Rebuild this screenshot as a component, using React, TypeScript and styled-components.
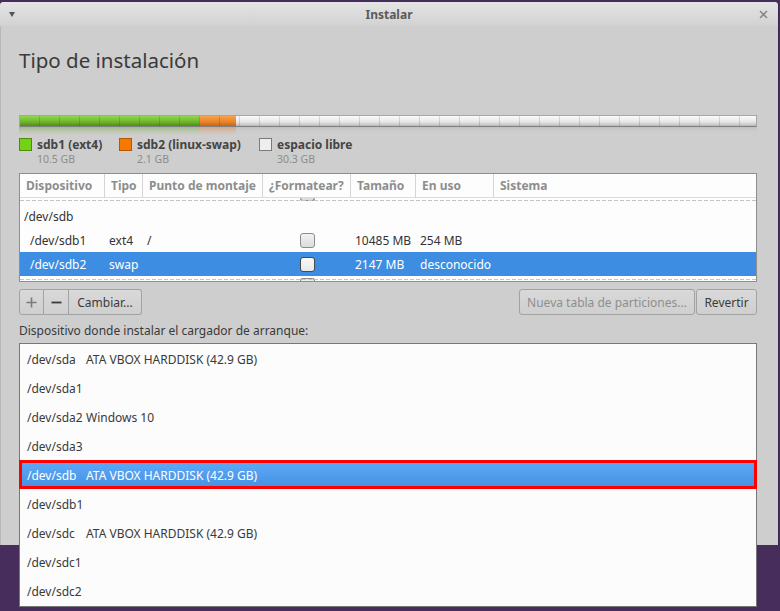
import React from "react";
import styled, { createGlobalStyle, css } from "styled-components";

const Global = createGlobalStyle`
  html, body { margin: 0; padding: 0; background: #472d5c; }
  * { box-sizing: border-box; }
`;

const Desktop = styled.div`
  position: relative;
  width: 780px;
  height: 611px;
  overflow: hidden;
  background: #472d5c;
  font-family: "Noto Sans", "DejaVu Sans", sans-serif;
  color: #3c3c3c;
`;

const Window = styled.div`
  position: absolute;
  left: 0;
  top: 2px;
  width: 779px;
  height: 543px;
  background: #cecece;
  border-radius: 4px 4px 0 0;
  border-right: 1px solid #3a2850;
  box-shadow: inset 1px 0 0 #b8b8b8;
  display: flex;
  flex-direction: column;
`;

const TitleBar = styled.div`
  height: 24px;
  flex: none;
  display: grid;
  grid-template-columns: 40px 1fr 40px;
  align-items: center;
  background: linear-gradient(#e4e4e4, #d2d2d2);
  border-radius: 4px 4px 0 0;
`;

const Title = styled.div`
  text-align: center;
  font-size: 12px;
  font-weight: bold;
  color: #5a5a5a;
`;

const MenuArrow = styled.div`
  margin-left: 9px;
  width: 0;
  height: 0;
  border-left: 3.5px solid transparent;
  border-right: 3.5px solid transparent;
  border-top: 5px solid #555;
`;

const CloseIcon = styled.svg`
  justify-self: end;
  margin-right: 10px;
`;

const Content = styled.div`
  padding: 20px 21px 0 19px;
  display: flex;
  flex-direction: column;
`;

const Heading = styled.h1`
  margin: 0;
  font-size: 20.5px;
  font-weight: normal;
  line-height: 28px;
  color: #3a3a3a;
`;

const BarWrap = styled.div`
  margin-top: 41px;
  height: 21px;
  display: flex;
  flex-direction: column;
`;

const segStyle = (c1: string, c2: string, c3: string) =>
  `linear-gradient(${c1}, ${c2} 60%, ${c3})`;

const Bar = styled.div`
  height: 12px;
  display: flex;
  position: relative;
  border: 1px solid #a6a6a6;
  border-bottom-color: #7f7f7f;
`;

const Seg = styled.div<{ $bg: string; $w: string }>`
  width: ${(p) => p.$w};
  flex: ${(p) => (p.$w === "auto" ? 1 : "none")};
  background: ${(p) => p.$bg};
`;

const Ticks = styled.div`
  position: absolute;
  inset: 0;
  background: repeating-linear-gradient(
    to right,
    transparent 0 19px,
    rgba(0, 0, 0, 0.13) 19px 20px
  );
`;

const Reflection = styled.div`
  height: 8px;
  display: flex;
  opacity: 0.35;
  -webkit-mask-image: linear-gradient(#000, transparent);
  mask-image: linear-gradient(#000, transparent);
`;

const Legend = styled.div`
  display: flex;
`;

const LegendItem = styled.div<{ $w: number }>`
  width: ${(p) => p.$w}px;
  display: grid;
  grid-template-columns: 18px 1fr;
  grid-template-rows: 16px 14px;
  align-items: center;
`;

const Swatch = styled.div<{ $c: string; $b: string }>`
  width: 13px;
  height: 13px;
  background: ${(p) => p.$c};
  border: 1px solid ${(p) => p.$b};
`;

const LegendName = styled.div`
  font-size: 12px;
  font-weight: bold;
  color: #454545;
`;

const LegendSize = styled.div`
  grid-column: 2;
  font-size: 10.5px;
  color: #8c8c8c;
`;

const cols = "85px 38px 120px 88px 65px 78px 1fr";

const Table = styled.div`
  margin-top: 7px;
  border: 1px solid #8e8e8e;
  background: #fdfdfd;
  display: flex;
  flex-direction: column;
`;

const HeaderRow = styled.div`
  display: grid;
  grid-template-columns: ${cols};
  height: 24px;
  border-bottom: 1px solid #dcdcdc;
`;

const HeaderCell = styled.div<{ $last?: boolean }>`
  font-size: 12px;
  font-weight: bold;
  color: #8d8d8d;
  padding-left: 6px;
  display: flex;
  align-items: center;
  border-right: ${(p) => (p.$last ? "none" : "1px solid #d4d4d4")};
  white-space: nowrap;
  overflow: hidden;
`;

const Body = styled.div`
  height: 83px;
  overflow: hidden;
  display: flex;
  flex-direction: column;
`;

const Dashed = styled.div`
  height: 1px;
  background: repeating-linear-gradient(
    to right,
    #c4c4c4 0 4px,
    transparent 4px 6px
  );
`;

const Edge = styled.div<{ $h: number }>`
  height: ${(p) => p.$h}px;
  display: grid;
  grid-template-columns: ${cols};
  position: relative;
`;

const EdgeLine = styled(Dashed)<{ $top: number }>`
  position: absolute;
  left: 0;
  right: 0;
  top: ${(p) => p.$top}px;
`;

const Stub = styled.div<{ $top: boolean }>`
  grid-column: 4;
  justify-self: center;
  width: 15px;
  height: 3px;
  border: 1px solid #8c8c8c;
  ${(p) =>
    p.$top
      ? css`border-top: none; border-radius: 0 0 3px 3px; background: #dedede;`
      : css`border-bottom: none; border-radius: 3px 3px 0 0; background: #f0f0f0; align-self: end;`}
`;

const Row = styled.div<{ $sel?: boolean }>`
  display: grid;
  grid-template-columns: ${cols};
  height: 24px;
  align-items: center;
  font-size: 12px;
  color: ${(p) => (p.$sel ? "#fff" : "#333")};
  background: ${(p) => (p.$sel ? "#3d8ee3" : "transparent")};
`;

const Cell = styled.div<{ $indent?: number }>`
  padding-left: ${(p) => p.$indent ?? 4}px;
  white-space: nowrap;
  overflow: hidden;
`;

const Check = styled.div<{ $sel?: boolean }>`
  justify-self: center;
  width: 15px;
  height: 15px;
  border-radius: 3px;
  border: 1px solid ${(p) => (p.$sel ? "#4a4a4a" : "#8c8c8c")};
  background: ${(p) =>
    p.$sel ? "linear-gradient(#fafafa, #e8e8e8)" : "linear-gradient(#f2f2f2, #dcdcdc)"};
`;

const ButtonRow = styled.div`
  margin-top: 7px;
  height: 26px;
  display: flex;
  justify-content: space-between;
`;

const Group = styled.div<{ $gap?: number }>`
  display: flex;
  gap: ${(p) => p.$gap ?? 0}px;
`;

const Button = styled.button<{ $w: number; $pos?: "first" | "mid" | "last"; $disabled?: boolean }>`
  width: ${(p) => p.$w}px;
  height: 26px;
  padding: 0;
  font-family: inherit;
  font-size: 12px;
  color: ${(p) => (p.$disabled ? "#8e8e8e" : "#3a3a3a")};
  background: linear-gradient(#d9d9d9, #cfcfcf);
  border: 1px solid #a2a2a2;
  border-radius: ${(p) =>
    p.$pos === "first" ? "3px 0 0 3px" : p.$pos === "mid" ? "0" : p.$pos === "last" ? "0 3px 3px 0" : "3px"};
  ${(p) => (p.$pos === "mid" || p.$pos === "last" ? "border-left: none;" : "")}
  display: flex;
  align-items: center;
  justify-content: center;
`;

const SignIcon = styled.svg`
  display: block;
`;

const Label = styled.div`
  margin-top: 8px;
  height: 16px;
  line-height: 16px;
  font-size: 12px;
  color: #3a3a3a;
`;

const Popup = styled.div`
  position: absolute;
  left: 19px;
  top: 343px;
  width: 738px;
  height: 264px;
  background: #fcfcfc;
  border: 1px solid #787878;
  display: flex;
  flex-direction: column;
`;

const Item = styled.div<{ $sel?: boolean }>`
  height: 29px;
  flex: none;
  display: grid;
  grid-template-columns: 59px 1fr;
  align-items: center;
  padding: 2px 0 0 7px;
  font-size: 12px;
  white-space: nowrap;
  color: ${(p) => (p.$sel ? "#fff" : "#3a3a3a")};
  ${(p) =>
    p.$sel &&
    css`
      margin: 0 -1px;
      padding-left: 8px;
      background: linear-gradient(#5faaf7, #4490e2);
      box-shadow: inset 0 0 0 3px #ff0000;
    `}
`;

const rows = [
  { dev: "/dev/sdb", indent: 4 },
  { dev: "/dev/sdb1", indent: 10, type: "ext4", mount: "/", check: true, size: "10485 MB", used: "254 MB" },
  { dev: "/dev/sdb2", indent: 10, type: "swap", mount: "", check: true, size: "2147 MB", used: "desconocido", sel: true },
];

const items = [
  ["/dev/sda", "ATA VBOX HARDDISK (42.9 GB)"],
  ["/dev/sda1", ""],
  ["/dev/sda2", "Windows 10"],
  ["/dev/sda3", ""],
  ["/dev/sdb", "ATA VBOX HARDDISK (42.9 GB)"],
  ["/dev/sdb1", ""],
  ["/dev/sdc", "ATA VBOX HARDDISK (42.9 GB)"],
  ["/dev/sdc1", ""],
  ["/dev/sdc2", ""],
];

const green = segStyle("#93d64f", "#6cb52a", "#4f8e15");
const orange = segStyle("#f7a449", "#e9822a", "#c9650d");
const free = segStyle("#fbfbfb", "#e6e6e6", "#b9b9b9");

export default function App() {
  return (
    <Desktop>
      <Global />
      <Window>
        <TitleBar>
          <MenuArrow />
          <Title>Instalar</Title>
          <CloseIcon width="9" height="9" viewBox="0 0 9 9">
            <path d="M1 1 L8 8 M8 1 L1 8" stroke="#8a8a8a" strokeWidth="1.6" />
          </CloseIcon>
        </TitleBar>
        <Content>
          <Heading>Tipo de instalación</Heading>
          <BarWrap>
            <Bar>
              <Seg $bg={green} $w="179px" />
              <Seg $bg={orange} $w="37px" />
              <Seg $bg={free} $w="auto" />
              <Ticks />
            </Bar>
            <Reflection>
              <Seg $bg="linear-gradient(#4f8e15, #6cb52a)" $w="180px" />
              <Seg $bg="linear-gradient(#c9650d, #e9822a)" $w="37px" />
              <Seg $bg="linear-gradient(#a8a8a8, #d8d8d8)" $w="auto" />
            </Reflection>
          </BarWrap>
          <Legend>
            <LegendItem $w={100}>
              <Swatch $c="#73d216" $b="#4e8a0c" />
              <LegendName>sdb1 (ext4)</LegendName>
              <LegendSize>10.5 GB</LegendSize>
            </LegendItem>
            <LegendItem $w={140}>
              <Swatch $c="#f57900" $b="#b35800" />
              <LegendName>sdb2 (linux-swap)</LegendName>
              <LegendSize>2.1 GB</LegendSize>
            </LegendItem>
            <LegendItem $w={120}>
              <Swatch $c="#eeeeee" $b="#7a7a7a" />
              <LegendName>espacio libre</LegendName>
              <LegendSize>30.3 GB</LegendSize>
            </LegendItem>
          </Legend>
          <Table>
            <HeaderRow>
              <HeaderCell>Dispositivo</HeaderCell>
              <HeaderCell>Tipo</HeaderCell>
              <HeaderCell>Punto de montaje</HeaderCell>
              <HeaderCell>¿Formatear?</HeaderCell>
              <HeaderCell>Tamaño</HeaderCell>
              <HeaderCell>En uso</HeaderCell>
              <HeaderCell $last>Sistema</HeaderCell>
            </HeaderRow>
            <Body>
              <Edge $h={6}>
                <Stub $top />
                <EdgeLine $top={2} />
              </Edge>
              {rows.map((r) => (
                <Row key={r.dev} $sel={r.sel}>
                  <Cell $indent={r.indent}>{r.dev}</Cell>
                  <Cell>{r.type}</Cell>
                  <Cell>{r.mount}</Cell>
                  {r.check ? <Check $sel={r.sel} /> : <Cell />}
                  <Cell>{r.size}</Cell>
                  <Cell>{r.used}</Cell>
                  <Cell />
                </Row>
              ))}
              <Edge $h={5}>
                <Stub $top={false} />
                <EdgeLine $top={3} />
              </Edge>
            </Body>
          </Table>
          <ButtonRow>
            <Group>
              <Button $w={25} $pos="first">
                <SignIcon width="11" height="11" viewBox="0 0 11 11">
                  <path d="M5.5 0.5 V10.5 M0.5 5.5 H10.5" stroke="#7a7a7a" strokeWidth="1.6" />
                </SignIcon>
              </Button>
              <Button $w={25} $pos="mid">
                <SignIcon width="11" height="11" viewBox="0 0 11 11">
                  <path d="M0.5 5.5 H10.5" stroke="#3a3a3a" strokeWidth="1.8" />
                </SignIcon>
              </Button>
              <Button $w={73} $pos="last">Cambiar...</Button>
            </Group>
            <Group $gap={1}>
              <Button $w={176} $disabled>Nueva tabla de particiones...</Button>
              <Button $w={61}>Revertir</Button>
            </Group>
          </ButtonRow>
          <Label>Dispositivo donde instalar el cargador de arranque:</Label>
        </Content>
      </Window>
      <Popup>
        {items.map(([d, desc], i) => (
          <Item key={d} $sel={i === 4}>
            <span>{d}</span>
            <span>{desc}</span>
          </Item>
        ))}
      </Popup>
    </Desktop>
  );
}
